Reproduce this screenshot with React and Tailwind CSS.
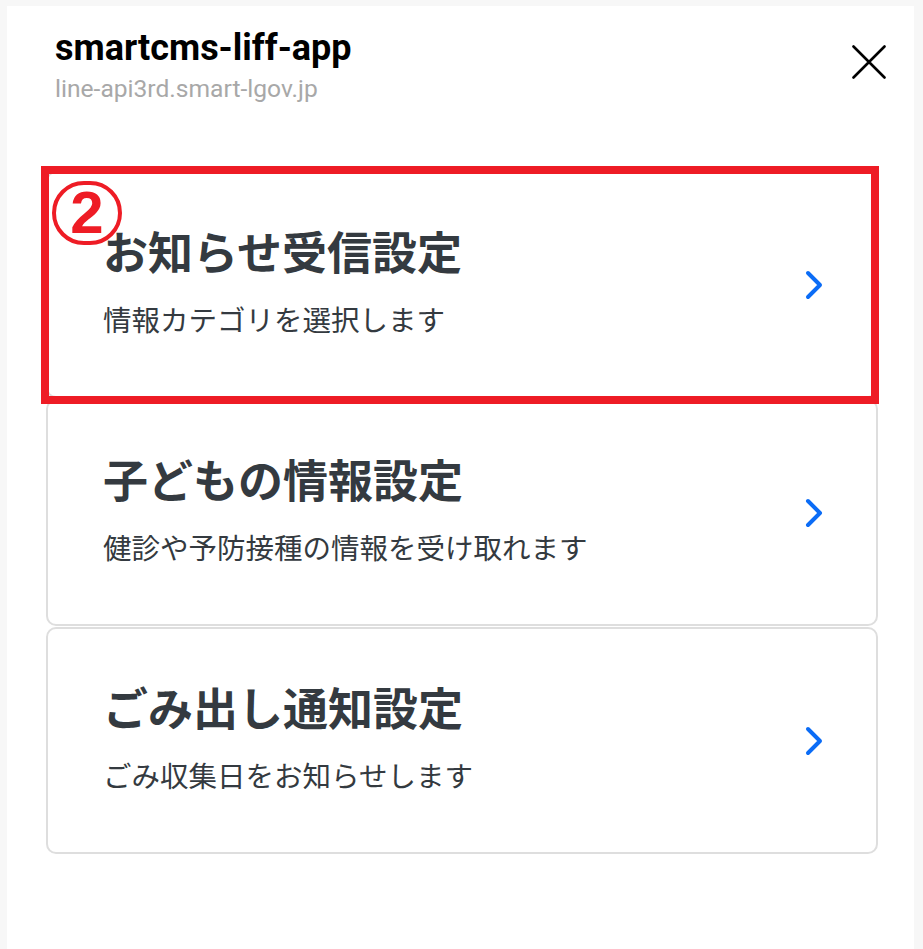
import React from 'react';

// Menu entries shown in the LIFF settings sheet
const menuItems = [
    { title: 'お知らせ受信設定', description: '情報カテゴリを選択します', highlighted: true },
    { title: '子どもの情報設定', description: '健診や予防接種の情報を受け取れます' },
    { title: 'ごみ出し通知設定', description: 'ごみ収集日をお知らせします' },
];

const jpFont = "font-['Noto_Sans_CJK_JP','Noto_Sans',sans-serif]";

const ChevronRight = () => (
    <svg width="18" height="30" viewBox="0 0 18 30" fill="none" className="shrink-0">
        <path d="M3 3 L15 15 L3 27" stroke="#0b6cf6" strokeWidth="4" strokeLinecap="round" strokeLinejoin="round" />
    </svg>
);

const CloseIcon = () => (
    <svg width="34" height="34" viewBox="0 0 34 34" fill="none">
        <path d="M1.5 1.5 L32.5 32.5 M32.5 1.5 L1.5 32.5" stroke="#000" strokeWidth="2.6" strokeLinecap="round" />
    </svg>
);

const MenuCard = ({ item }) => (
    <div className="relative h-[227px] bg-white border-2 border-[#dedede] rounded-[10px] flex items-center justify-between pl-[55px] pr-[53px]">
        <div className={`${jpFont} pb-[6px]`}>
            <p className="text-[45px] leading-[1.2] font-bold text-[#343a40]">{item.title}</p>
            <p className="text-[28.5px] leading-[1.4] mt-[21px] text-[#343a40]">{item.description}</p>
        </div>
        <ChevronRight />

        {/* Annotation overlay: red box with circled number */}
        {item.highlighted && (
            <>
                <div className="absolute z-10 -left-[7px] -top-[7px] w-[838px] h-[238px] border-[8px] border-[#ee1c25] pointer-events-none" />
                <div className="absolute z-10 left-[4px] top-[8px] w-[70px] h-[64px] rounded-full border-[4px] border-[#ee1c25] flex items-center justify-center">
                    <span className="font-['Liberation_Sans',Arial,sans-serif] font-bold text-[60px] leading-none text-[#ee1c25]">2</span>
                </div>
            </>
        )}
    </div>
);

const App = () => {
    return (
        <div className="min-h-screen bg-[#f7f7f7] pl-[7px] pr-[9px] pt-[6px]">
            <div className="bg-white min-h-[943px]">
                {/* Header */}
                <div className="flex items-start justify-between pl-[48px] pr-[28px] pt-[21px]">
                    <div className="font-['Roboto',sans-serif]">
                        <p className="text-[36px] leading-[1.2] font-bold text-black">smartcms-liff-app</p>
                        <p className="text-[24.6px] leading-[1.3] mt-[3px] text-[#a8a8a8]">line-api3rd.smart-lgov.jp</p>
                    </div>
                    <button className="mt-[18px]">
                        <CloseIcon />
                    </button>
                </div>

                {/* Menu cards */}
                <div className="flex flex-col gap-[1px] ml-[39px] mr-[36px] mt-[66px]">
                    {menuItems.map((item) => (
                        <MenuCard key={item.title} item={item} />
                    ))}
                </div>
            </div>
        </div>
    );
};

export default App;
